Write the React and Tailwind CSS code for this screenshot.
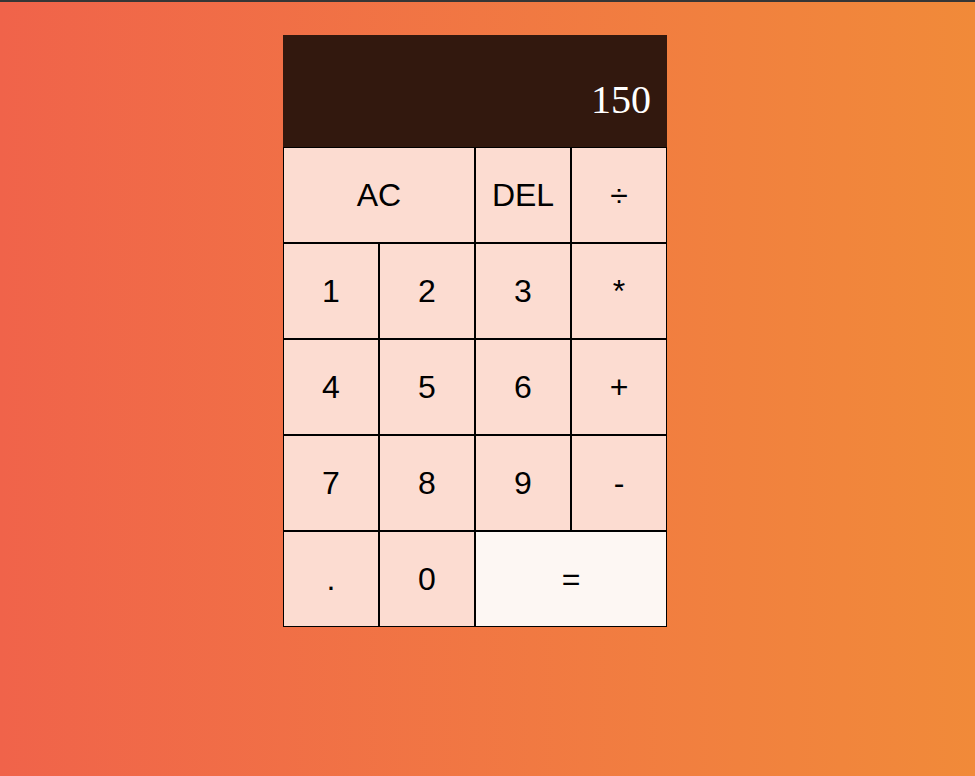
import React from 'react';

const keys = [
  { label: 'AC', span: true },
  { label: 'DEL' },
  { label: '÷' },
  { label: '1' }, { label: '2' }, { label: '3' }, { label: '*' },
  { label: '4' }, { label: '5' }, { label: '6' }, { label: '+' },
  { label: '7' }, { label: '8' }, { label: '9' }, { label: '-' },
  { label: '.' }, { label: '0' },
  { label: '=', span: true, light: true },
];

export default function App() {
  return (
    <div className="min-h-screen border-t-2 border-[#363636] bg-gradient-to-r from-[#f0634a] to-[#f18a39]">
      <div className="flex justify-center pt-[33px] pr-[25px]">
        <div className="grid grid-cols-[repeat(4,96px)] grid-rows-[112px_repeat(5,96px)]">
          {/* Output screen */}
          <div className="col-span-4 bg-[#32180e] flex items-end justify-end pr-4 pb-[24px]">
            <span className="text-white text-[40px] leading-[46px] font-['Liberation_Serif',serif]">150</span>
          </div>
          {keys.map(k => (
            <button key={k.label}
              className={`${k.span ? 'col-span-2' : ''} ${k.light ? 'bg-[#fdf7f3]' : 'bg-[#fcdcd1]'} border border-black text-black text-[2rem] font-['Liberation_Sans',Arial,sans-serif] flex items-center justify-center`}>
              {k.label}
            </button>
          ))}
        </div>
      </div>
    </div>
  );
}
